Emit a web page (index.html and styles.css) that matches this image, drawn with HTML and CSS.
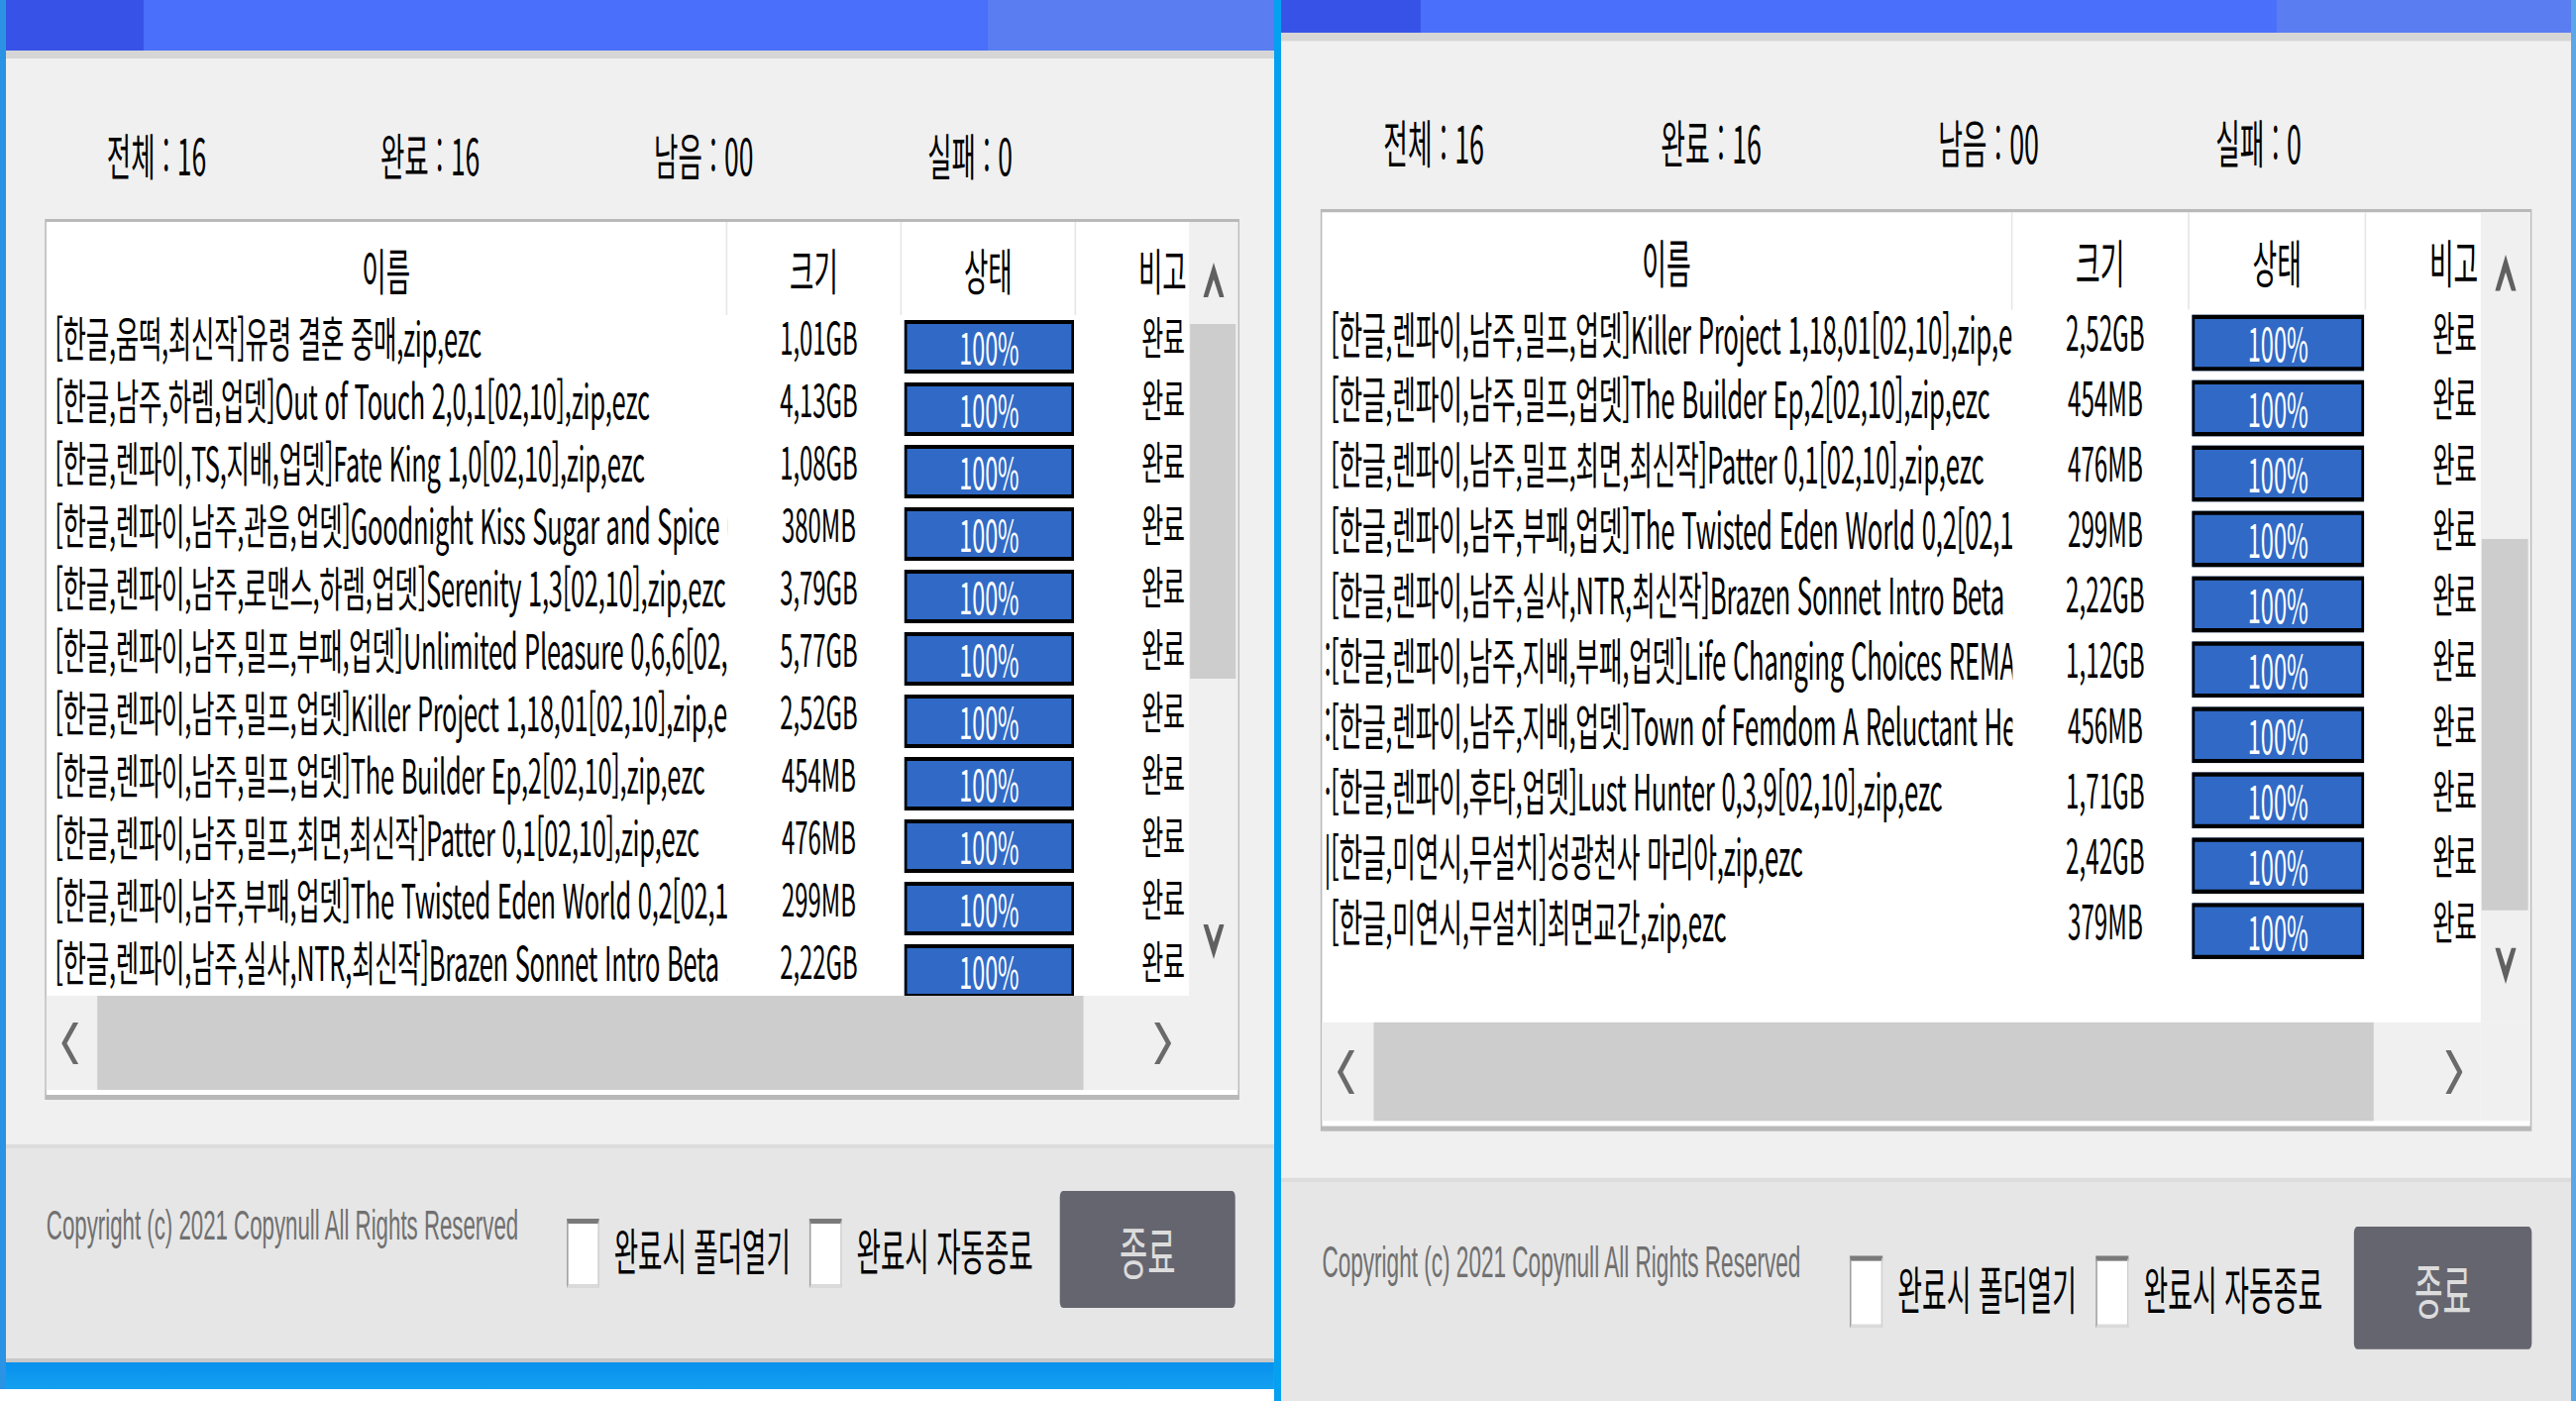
FILE: index.html
```html
<!DOCTYPE html>
<html lang="ko">
<head>
  <meta charset="UTF-8" />
  <title>다운로드 상태</title>
  <link rel="stylesheet" href="styles.css">
</head>
<body>
<div class="desk">

  <section class="win win-left">
    <div class="frame">
      <div class="titlebar"><span class="tb-dark"></span><span class="tb-light"></span></div>
      <div class="title-edge"></div>
      <div class="body">
        <div class="stats">
          <span>전체 : 16</span><span>완료 : 16</span><span>남음 : 00</span><span>실패 : 0</span>
        </div>
        <div class="listbox">
          <div class="viewport">
            <div class="row head"><div class="c-name">이름</div><div class="c-size">크기</div><div class="c-state">상태</div><div class="c-note">비고</div></div>
            <div class="row"><div class="c-name">[한글,움떡,최신작]유령 결혼 중매,zip,ezc</div><div class="c-size">1,01GB</div><div class="c-state"><div class="bar">100%</div></div><div class="c-note">완료</div></div>
            <div class="row"><div class="c-name">[한글,남주,하렘,업뎃]Out of Touch 2,0,1[02,10],zip,ezc</div><div class="c-size">4,13GB</div><div class="c-state"><div class="bar">100%</div></div><div class="c-note">완료</div></div>
            <div class="row"><div class="c-name">[한글,렌파이,TS,지배,업뎃]Fate King 1,0[02,10],zip,ezc</div><div class="c-size">1,08GB</div><div class="c-state"><div class="bar">100%</div></div><div class="c-note">완료</div></div>
            <div class="row"><div class="c-name">[한글,렌파이,남주,관음,업뎃]Goodnight Kiss Sugar and Spice 0,3[02,10],zip,ezc</div><div class="c-size">380MB</div><div class="c-state"><div class="bar">100%</div></div><div class="c-note">완료</div></div>
            <div class="row"><div class="c-name">[한글,렌파이,남주,로맨스,하렘,업뎃]Serenity 1,3[02,10],zip,ezc</div><div class="c-size">3,79GB</div><div class="c-state"><div class="bar">100%</div></div><div class="c-note">완료</div></div>
            <div class="row"><div class="c-name">[한글,렌파이,남주,밀프,부패,업뎃]Unlimited Pleasure 0,6,6[02,10],zip,ezc</div><div class="c-size">5,77GB</div><div class="c-state"><div class="bar">100%</div></div><div class="c-note">완료</div></div>
            <div class="row"><div class="c-name">[한글,렌파이,남주,밀프,업뎃]Killer Project 1,18,01[02,10],zip,ezc</div><div class="c-size">2,52GB</div><div class="c-state"><div class="bar">100%</div></div><div class="c-note">완료</div></div>
            <div class="row"><div class="c-name">[한글,렌파이,남주,밀프,업뎃]The Builder Ep,2[02,10],zip,ezc</div><div class="c-size">454MB</div><div class="c-state"><div class="bar">100%</div></div><div class="c-note">완료</div></div>
            <div class="row"><div class="c-name">[한글,렌파이,남주,밀프,최면,최신작]Patter 0,1[02,10],zip,ezc</div><div class="c-size">476MB</div><div class="c-state"><div class="bar">100%</div></div><div class="c-note">완료</div></div>
            <div class="row"><div class="c-name">[한글,렌파이,남주,부패,업뎃]The Twisted Eden World 0,2[02,10],zip,ezc</div><div class="c-size">299MB</div><div class="c-state"><div class="bar">100%</div></div><div class="c-note">완료</div></div>
            <div class="row"><div class="c-name">[한글,렌파이,남주,실사,NTR,최신작]Brazen Sonnet Intro Beta 1,0[02,10],zip,ezc</div><div class="c-size">2,22GB</div><div class="c-state"><div class="bar">100%</div></div><div class="c-note">완료</div></div>
          </div>
          <div class="vscroll">
            <svg class="arr-v" viewBox="0 0 40 35" preserveAspectRatio="none"><polygon points="20,0 40,35 31,35 20,17 9,35 0,35"/></svg>
            <div class="vthumb" style="margin-top:27px"></div>
            <svg class="arr-v arr-down" viewBox="0 0 40 35" preserveAspectRatio="none"><polygon points="20,35 40,0 31,0 20,18 9,0 0,0"/></svg>
          </div>
          <div class="hscroll">
            <svg class="arr-h" viewBox="0 0 32 42" preserveAspectRatio="none"><polygon points="32,0 10,21 32,42 22,42 0,21 22,0"/></svg>
            <div class="hthumb"></div>
            <svg class="arr-h arr-right" viewBox="0 0 32 42" preserveAspectRatio="none"><polygon points="0,0 22,21 0,42 10,42 32,21 10,0"/></svg>
          </div>
          <div class="corner"></div>
        </div>
      </div>
      <div class="footer">
        <div class="copy">Copyright (c) 2021 Copynull All Rights Reserved</div>
        <label class="opt opt-open"><span class="check"></span><span class="opt-text">완료시 폴더열기</span></label>
        <label class="opt"><span class="check"></span><span class="opt-text">완료시 자동종료</span></label>
        <button class="quit">종료</button>
      </div>
      <div class="taskbar"></div>
    </div>
  </section>

  <section class="win win-right">
    <div class="frame">
      <div class="titlebar"><span class="tb-dark"></span><span class="tb-light"></span></div>
      <div class="title-edge"></div>
      <div class="body">
        <div class="stats">
          <span>전체 : 16</span><span>완료 : 16</span><span>남음 : 00</span><span>실패 : 0</span>
        </div>
        <div class="listbox">
          <div class="viewport">
            <div class="row head"><div class="c-name">이름</div><div class="c-size">크기</div><div class="c-state">상태</div><div class="c-note">비고</div></div>
            <div class="row"><div class="c-name">[한글,렌파이,남주,밀프,업뎃]Killer Project 1,18,01[02,10],zip,ezc</div><div class="c-size">2,52GB</div><div class="c-state"><div class="bar">100%</div></div><div class="c-note">완료</div></div>
            <div class="row"><div class="c-name">[한글,렌파이,남주,밀프,업뎃]The Builder Ep,2[02,10],zip,ezc</div><div class="c-size">454MB</div><div class="c-state"><div class="bar">100%</div></div><div class="c-note">완료</div></div>
            <div class="row"><div class="c-name">[한글,렌파이,남주,밀프,최면,최신작]Patter 0,1[02,10],zip,ezc</div><div class="c-size">476MB</div><div class="c-state"><div class="bar">100%</div></div><div class="c-note">완료</div></div>
            <div class="row"><div class="c-name">[한글,렌파이,남주,부패,업뎃]The Twisted Eden World 0,2[02,10],zip,ezc</div><div class="c-size">299MB</div><div class="c-state"><div class="bar">100%</div></div><div class="c-note">완료</div></div>
            <div class="row"><div class="c-name">[한글,렌파이,남주,실사,NTR,최신작]Brazen Sonnet Intro Beta 1,0[02,10],zip,ezc</div><div class="c-size">2,22GB</div><div class="c-state"><div class="bar">100%</div></div><div class="c-note">완료</div></div>
            <div class="row"><div class="c-name"><span class="frag">:</span>[한글,렌파이,남주,지배,부패,업뎃]Life Changing Choices REMAKE[02,10],zip,ezc</div><div class="c-size">1,12GB</div><div class="c-state"><div class="bar">100%</div></div><div class="c-note">완료</div></div>
            <div class="row"><div class="c-name"><span class="frag">:</span>[한글,렌파이,남주,지배,업뎃]Town of Femdom A Reluctant Hero[02,10],zip,ezc</div><div class="c-size">456MB</div><div class="c-state"><div class="bar">100%</div></div><div class="c-note">완료</div></div>
            <div class="row"><div class="c-name"><span class="frag">·</span>[한글,렌파이,후타,업뎃]Lust Hunter 0,3,9[02,10],zip,ezc</div><div class="c-size">1,71GB</div><div class="c-state"><div class="bar">100%</div></div><div class="c-note">완료</div></div>
            <div class="row"><div class="c-name"><span class="frag">|</span>[한글,미연시,무설치]성광천사 마리아,zip,ezc</div><div class="c-size">2,42GB</div><div class="c-state"><div class="bar">100%</div></div><div class="c-note">완료</div></div>
            <div class="row"><div class="c-name">[한글,미연시,무설치]최면교간,zip,ezc</div><div class="c-size">379MB</div><div class="c-state"><div class="bar">100%</div></div><div class="c-note">완료</div></div>
          </div>
          <div class="vscroll">
            <svg class="arr-v" viewBox="0 0 40 35" preserveAspectRatio="none"><polygon points="20,0 40,35 31,35 20,17 9,35 0,35"/></svg>
            <div class="vthumb" style="margin-top:239px"></div>
            <svg class="arr-v arr-down" viewBox="0 0 40 35" preserveAspectRatio="none"><polygon points="20,35 40,0 31,0 20,18 9,0 0,0"/></svg>
          </div>
          <div class="hscroll">
            <svg class="arr-h" viewBox="0 0 32 42" preserveAspectRatio="none"><polygon points="32,0 10,21 32,42 22,42 0,21 22,0"/></svg>
            <div class="hthumb"></div>
            <svg class="arr-h arr-right" viewBox="0 0 32 42" preserveAspectRatio="none"><polygon points="0,0 22,21 0,42 10,42 32,21 10,0"/></svg>
          </div>
          <div class="corner"></div>
        </div>
      </div>
      <div class="footer">
        <div class="copy">Copyright (c) 2021 Copynull All Rights Reserved</div>
        <label class="opt opt-open"><span class="check"></span><span class="opt-text">완료시 폴더열기</span></label>
        <label class="opt"><span class="check"></span><span class="opt-text">완료시 자동종료</span></label>
        <button class="quit">종료</button>
      </div>
      <div class="taskbar"></div>
    </div>
  </section>

</div>
</body>
</html>
```

FILE: styles.css
```css
body {
  margin: 0;
  background: #fff;
  font-family: "Noto Sans CJK KR", "Liberation Sans", sans-serif;
  color: #000;
  overflow: hidden;
}
.desk {
  position: relative;
  width: 2600px;
  height: 1414px;
  overflow: hidden;
}

/* windows sit side by side on the desktop, both stretched like the capture */
.win {
  position: absolute;
  top: 0;
  height: 1414px;
  overflow: hidden;
}
.win-left {
  left: 0;
  width: 1280px;
  padding-left: 6px;
  border-right: 7px solid #03a1f0;
  background: linear-gradient(#2b93e3, #2b93e3) 0 0 / 6px 1402px no-repeat, #fff;
}
.win-right {
  left: 1293px;
  width: 1302px;
  border-right: 5px solid #5aa6e6;
  background: #f0f0f0;
}
.frame {
  width: 2415px;
  height: 1402px;
  display: flex;
  flex-direction: column;
  background: #f0f0f0;
  transform-origin: 0 0;
}
.win-left .frame {
  transform: scale(0.53, 1);
}
.win-right .frame {
  width: 2423px;
  transform: translateY(-20.4px) scale(0.5374, 1.047);
}

/* title */
.titlebar {
  flex: none;
  height: 51px;
  display: flex;
  background: #4a6ffa;
}
.tb-dark {
  width: 262px;
  background: #3753e7;
}
.tb-light {
  flex: 1;
  margin-left: 1608px;
  background: #5a7df2;
}
.title-edge {
  flex: none;
  height: 8px;
  background: #d6d6d6;
}

/* body */
.body {
  flex: none;
  height: 1096px;
  box-sizing: border-box;
  padding-top: 70px;
}
.stats {
  display: flex;
  padding-left: 192px;
  height: 52px;
  line-height: 52px;
  font-size: 50px;
  margin-bottom: 40px;
  white-space: nowrap;
}
.stats span {
  width: 521px;
  flex: none;
}

.listbox {
  margin-left: 74px;
  width: 2275px;
  box-sizing: border-box;
  border: solid #b9b9b9;
  border-width: 3px 3px 5px;
  padding-bottom: 5px;
  background: #fff;
  display: grid;
  grid-template-columns: 2176px 93px;
  grid-template-rows: 781px 95px;
}
.viewport {
  overflow: hidden;
}
.row {
  display: flex;
  height: 63px;
  white-space: nowrap;
  font-size: 45px;
  line-height: 42px;
}
.row > div {
  flex: none;
  width: 332px;
  box-sizing: border-box;
}
.row > .c-name {
  width: 1297px;
  overflow: hidden;
  padding-left: 16px;
  font-size: 48px;
  letter-spacing: -0.5px;
}
.c-size {
  text-align: center;
  padding-left: 16px;
}
.c-note {
  text-align: center;
}
.c-state {
  padding: 5px 4px 0 5px;
}
.bar {
  height: 54px;
  box-sizing: border-box;
  border: solid #000;
  border-width: 4px 5px;
  background: #316ac6;
  color: #fff;
  text-align: center;
  font-size: 44px;
  line-height: 44px;
}
.row.head {
  height: 94px;
  font-size: 50px;
}
.row.head > div {
  height: 100%;
  padding: 0;
  border-right: 3px solid #e6e6e6;
  display: flex;
  align-items: center;
  justify-content: center;
  font-size: 50px;
  letter-spacing: 0;
}
.frag {
  display: inline-block;
  width: 12px;
  margin-left: -12px;
}

/* scrollbars */
.vscroll {
  background: #f0f0f0;
  display: flex;
  flex-direction: column;
  align-items: center;
}
.arr-v {
  flex: none;
  width: 40px;
  height: 35px;
  margin-top: 41px;
  fill: #606060;
}
.arr-down {
  margin-top: auto;
  margin-bottom: 37px;
}
.vthumb {
  flex: none;
  align-self: flex-start;
  margin-left: 2px;
  width: 87px;
  height: 358px;
  background: #cdcdcd;
}
.hscroll {
  background: #f0f0f0;
  display: flex;
  align-items: center;
}
.arr-h {
  flex: none;
  width: 32px;
  height: 42px;
  margin-left: 29px;
  fill: #6a6a6a;
}
.hthumb {
  flex: none;
  align-self: stretch;
  width: 1878px;
  margin-left: 36px;
  background: #cdcdcd;
}
.arr-right {
  margin-left: 135px;
}
.corner {
  background: #f0f0f0;
}

/* footer */
.footer {
  flex: none;
  height: 212px;
  border-top: 4px solid #dcdcdc;
  border-bottom: 4px solid #c8c8c8;
  background: #e6e6e6;
  display: flex;
  align-items: center;
}
.copy {
  flex: none;
  align-self: flex-start;
  width: 991px;
  margin: 54px 0 0 77px;
  font-family: "Liberation Sans", sans-serif;
  font-size: 42px;
  line-height: 48px;
  color: #707070;
  white-space: nowrap;
}
.opt {
  flex: none;
  display: flex;
  align-items: center;
  width: 462px;
}
.check {
  flex: none;
  width: 62px;
  height: 70px;
  box-sizing: border-box;
  background: #fff;
  border-top: 5px solid #7a7a7a;
  border-left: 3px solid #a0a0a0;
  border-right: 3px solid #cfcfcf;
  border-bottom: 4px solid #dadada;
}
.opt-text {
  margin: 0 0 10px 28px;
  font-size: 50px;
  line-height: 56px;
  white-space: nowrap;
}
.quit {
  flex: none;
  margin: 0 74px 8px auto;
  width: 334px;
  height: 118px;
  border: none;
  border-radius: 6px;
  background: #65656f;
  color: #dcdcdc;
  font-family: "Noto Sans CJK KR", sans-serif;
  font-size: 58px;
  padding: 0;
}
.taskbar {
  flex: none;
  height: 27px;
  background: linear-gradient(#0890ee, #14a0f0);
}
```
